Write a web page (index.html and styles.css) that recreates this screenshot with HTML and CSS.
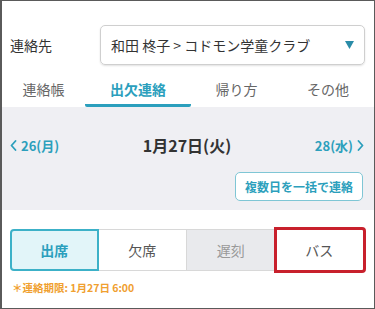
FILE: index.html
```html
<!DOCTYPE html>
<html lang="ja">
<head>
<meta charset="utf-8">
<link rel="stylesheet" href="styles.css">
</head>
<body>
<div class="frame">
  <div class="top">
    <div class="contact-row">
      <div class="contact-label">連絡先</div>
      <div class="select">
        <span class="select-text">和田 柊子 &gt; コドモン学童クラブ</span>
        <svg class="select-arrow" width="9" height="8" viewBox="0 0 9 8"><path d="M0 0H9L4.5 8Z" fill="#2a8ca8"/></svg>
      </div>
    </div>
    <div class="tabs">
      <div class="tab">連絡帳</div>
      <div class="tab active">出欠連絡</div>
      <div class="tab">帰り方</div>
      <div class="tab">その他</div>
    </div>
  </div>
  <div class="datearea">
    <div class="datenav">
      <div class="nav prev">
        <svg width="7" height="11" viewBox="0 0 7 11"><path d="M5.5 1L1.5 5.5L5.5 10" fill="none" stroke="#2c9fbc" stroke-width="1.8" stroke-linecap="round" stroke-linejoin="round"/></svg>
        <span>26(月)</span>
      </div>
      <div class="date-title">1月27日(火)</div>
      <div class="nav next">
        <span>28(水)</span>
        <svg width="7" height="11" viewBox="0 0 7 11"><path d="M1.5 1L5.5 5.5L1.5 10" fill="none" stroke="#2c9fbc" stroke-width="1.8" stroke-linecap="round" stroke-linejoin="round"/></svg>
      </div>
    </div>
    <div class="bulk-row">
      <button class="bulk-btn">複数日を一括で連絡</button>
    </div>
  </div>
  <div class="bottom">
    <div class="segments">
      <div class="seg active">出席</div>
      <div class="seg">欠席</div>
      <div class="seg disabled">遅刻</div>
      <div class="seg marked">バス</div>
    </div>
    <div class="deadline">＊連絡期限: 1月27日 6:00</div>
  </div>
</div>
</body>
</html>
```

FILE: styles.css
```css
* { box-sizing: border-box; }
html, body { margin: 0; padding: 0; background: #fff; }
body { font-family: "Noto Sans CJK JP", "Noto Sans", sans-serif; color: #333; }

.frame {
  width: 375px;
  height: 309px;
  border: 1px solid #5a5a5a;
  border-left-width: 2px;
  overflow: hidden;
  display: flex;
  flex-direction: column;
}

.top { background: #fff; }

.contact-row {
  display: flex;
  align-items: center;
  padding: 24px 9px 0 8px;
}
.contact-label {
  width: 90px;
  font-size: 14px;
  color: #333;
}
.select {
  flex: 1;
  height: 40px;
  border: 1px solid #cfcfcf;
  border-radius: 5px;
  box-shadow: 0 1px 2px rgba(0,0,0,0.12);
  display: flex;
  align-items: center;
  justify-content: space-between;
  padding: 0 10px 0 10px;
}
.select-text { font-size: 14px; color: #333; }
.select-arrow { display: block; }

.tabs {
  display: grid;
  grid-template-columns: 83px 106px 91px 1fr;
}
.tab {
  text-align: center;
  font-size: 14px;
  line-height: 20px;
  padding: 14px 0 5px;
  color: #666;
  border-bottom: 3px solid transparent;
}
.tab.active {
  color: #2b9fbd;
  font-weight: bold;
  border-bottom-color: #2b9fbd;
  border-radius: 0 0 2px 2px;
}

.datearea {
  background: #efeff3;
  padding: 28px 10px 9px 8px;
}
.datenav {
  display: flex;
  align-items: center;
  justify-content: space-between;
  height: 20px;
}
.nav {
  display: flex;
  align-items: center;
  gap: 4px;
  color: #2c9fbc;
  font-size: 13px;
  font-weight: bold;
  width: 60px;
}
.nav.next { justify-content: flex-end; }
.nav svg { display: block; }
.date-title {
  font-size: 16px;
  font-weight: bold;
  color: #333;
}
.bulk-row {
  display: flex;
  justify-content: flex-end;
  margin-top: 17px;
}
.bulk-btn {
  height: 29px;
  padding: 0 9px;
  background: #fff;
  border: 1.5px solid #7fc6d5;
  border-radius: 5px;
  color: #2c9fbc;
  font-family: inherit;
  font-size: 12px;
  font-weight: bold;
  margin-right: 1px;
}

.bottom {
  flex: 1;
  background: #fff;
  padding: 19px 10px 0 8px;
}
.segments {
  display: grid;
  grid-template-columns: repeat(4, 1fr);
  height: 42px;
}
.seg {
  display: flex;
  align-items: center;
  justify-content: center;
  font-size: 14px;
  color: #555;
  background: #fff;
  border: 1px solid #d8d8d8;
  border-left: none;
}
.seg.active {
  background: #e2f5f9;
  border: 2px solid #3cb1c8;
  border-radius: 4px 0 0 4px;
  color: #2b9fbd;
  font-weight: bold;
}
.seg.disabled {
  background: #e9eaed;
  color: #999;
}
.seg.marked {
  border-radius: 0 2px 2px 0;
  outline: 3px solid #c8202c;
  outline-offset: -1px;
}
.deadline {
  margin-top: 10px;
  font-size: 10.5px;
  font-weight: bold;
  color: #f0a030;
  line-height: 14px;
  padding-left: 2px;
}
```
